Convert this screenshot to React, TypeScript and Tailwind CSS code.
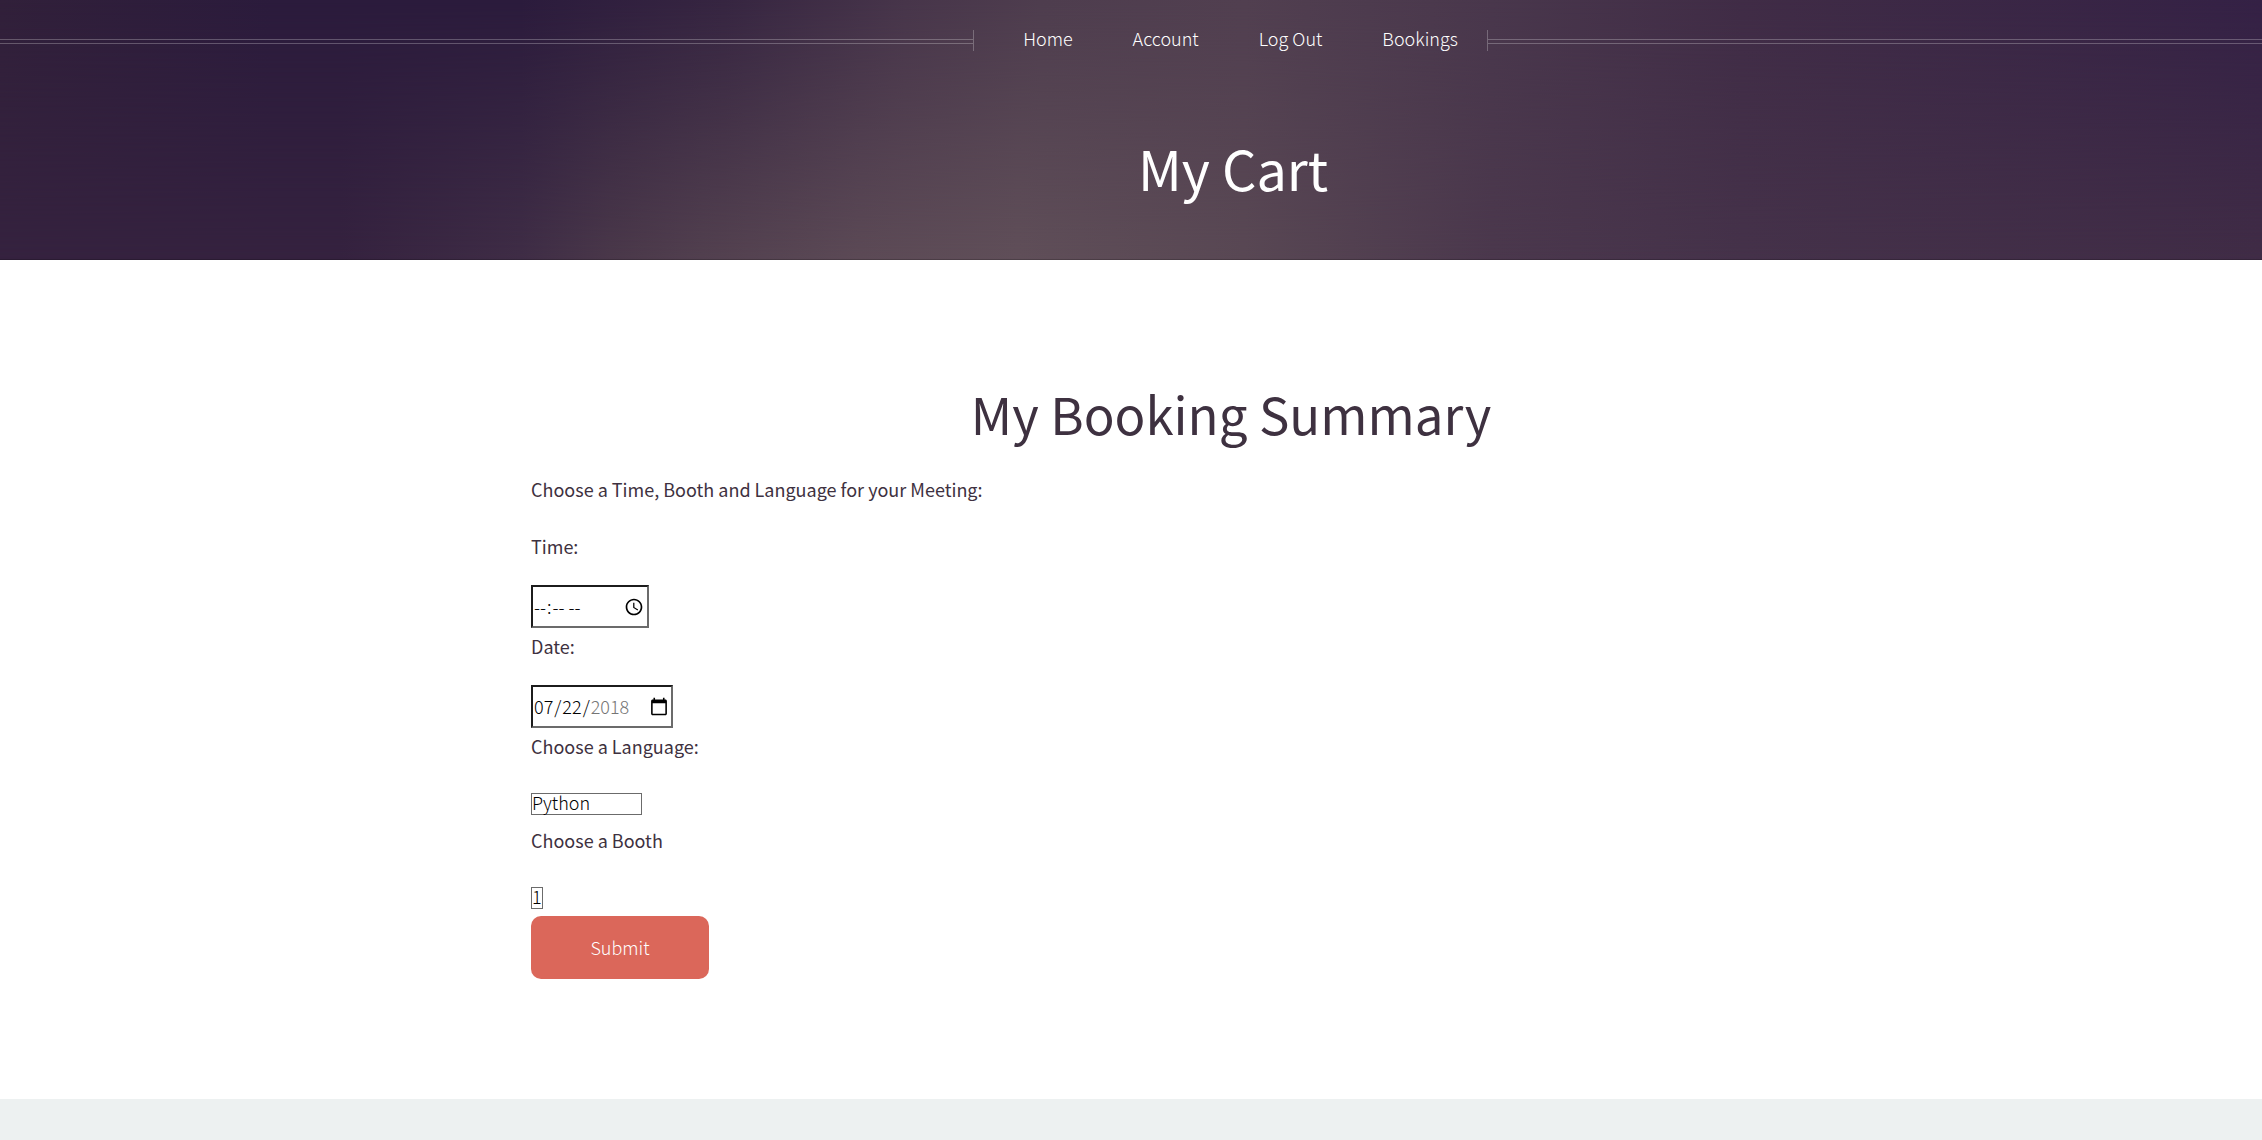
import React from "react";

const links = ["Home", "Account", "Log Out", "Bookings"];

const fieldClass =
  "block h-[43px] border-2 border-t-[#1c1c1c] border-l-[#1c1c1c] border-r-[#6b6b6b] border-b-[#6b6b6b] bg-white text-[18px] font-light text-black [&::-webkit-calendar-picker-indicator]:size-5 [&::-webkit-datetime-edit-year-field]:text-[#757575]!";

function Label({ htmlFor, children }: { htmlFor: string; children: React.ReactNode }) {
  return (
    <label htmlFor={htmlFor} className="block">
      {children}
    </label>
  );
}

function Select({ id, options, className }: { id: string; options: string[]; className: string }) {
  return (
    <div className={`mt-[30px] flex h-[22px] items-center border border-[#6b6b6b] bg-white pb-1 ${className}`}>
      <select
        id={id}
        className="h-8 w-full shrink-0 appearance-none bg-transparent text-[18px] font-light text-black"
      >
        {options.map((option) => (
          <option key={option}>{option}</option>
        ))}
      </select>
    </div>
  );
}

function Rule({ className }: { className: string }) {
  return (
    <div className={`flex h-[21px] grow items-end border-white/25 pb-[7px] ${className}`}>
      <div className="h-[5px] w-full border-y border-white/25" />
    </div>
  );
}

export default function App() {
  return (
    <div className="min-h-screen bg-[#edf1f1] font-['Noto_Sans_CJK_SC','Noto_Sans_CJK_JP',sans-serif] text-[18px] leading-[33px] font-light text-[#3e3140]">
      <header className="relative isolate h-[260px] bg-[linear-gradient(90deg,#35223f_0%,#35223f_15%,#3f2d46_23%,#4a384a_27%,#52404f_31%,#5c4a56_38%,#604f59_45%,#594854_55%,#4b384d_66%,#45324a_77%,#402c46_100%)] text-white shadow-[inset_0_-1px_#00000033]">
        <div className="absolute inset-0 -z-10 bg-[linear-gradient(90deg,#31203a_0%,#2b1b3c_12%,#2b1b3c_23%,#362541_32%,#47354a_40%,#4e3d4e_46%,#513f50_55%,#49374c_66%,#402c46_77%,#342145_100%)] mask-[linear-gradient(180deg,#000,transparent)]" />
        <nav className="flex items-center pt-[30px]">
          <Rule className="basis-[200px] border-r" />
          <ul className="flex h-[21px] items-center gap-[60px] pr-[29px] pb-1 pl-[49px]">
            {links.map((name) => (
              <li key={name}>
                <a href="#" className="block">
                  {name}
                </a>
              </li>
            ))}
          </ul>
          <Rule className="basis-0 border-l" />
        </nav>
        <h1 className="pt-[77px] pl-[204px] text-center text-[54px] leading-[80px] font-normal">My Cart</h1>
      </header>

      <main className="bg-white pt-[117px] pb-[120px] pl-[200px]">
        <form className="mx-auto max-w-[1400px]" onSubmit={(e) => e.preventDefault()}>
          <h2 className="text-center text-[51px] leading-[72px] font-normal">My Booking Summary</h2>
          <p className="mt-6 mb-6 font-normal">Choose a Time, Booth and Language for your Meeting:</p>
          <div className="font-normal">
            <Label htmlFor="time">Time:</Label>
            <input id="time" type="time" className={`mt-[22px] mb-[2px] w-[118px] ${fieldClass}`} />
            <Label htmlFor="date">Date:</Label>
            <input
              id="date"
              type="date"
              min="2018-01-01"
              max="2018-12-31"
              defaultValue="2018-07-22"
              className={`mt-[22px] mb-[2px] w-[142px] ${fieldClass}`}
            />
            <Label htmlFor="language">Choose a Language:</Label>
            <Select id="language" options={["Python", "JavaScript"]} className="mb-[9px] w-[111px]" />
            <Label htmlFor="booth">Choose a Booth</Label>
            <Select id="booth" options={["1", "2"]} className="mb-[7px] w-3" />
          </div>
          <button type="submit" className="block h-[63px] w-[178px] rounded-[10px] bg-[#db675a] text-white">
            Submit
          </button>
        </form>
      </main>
    </div>
  );
}
